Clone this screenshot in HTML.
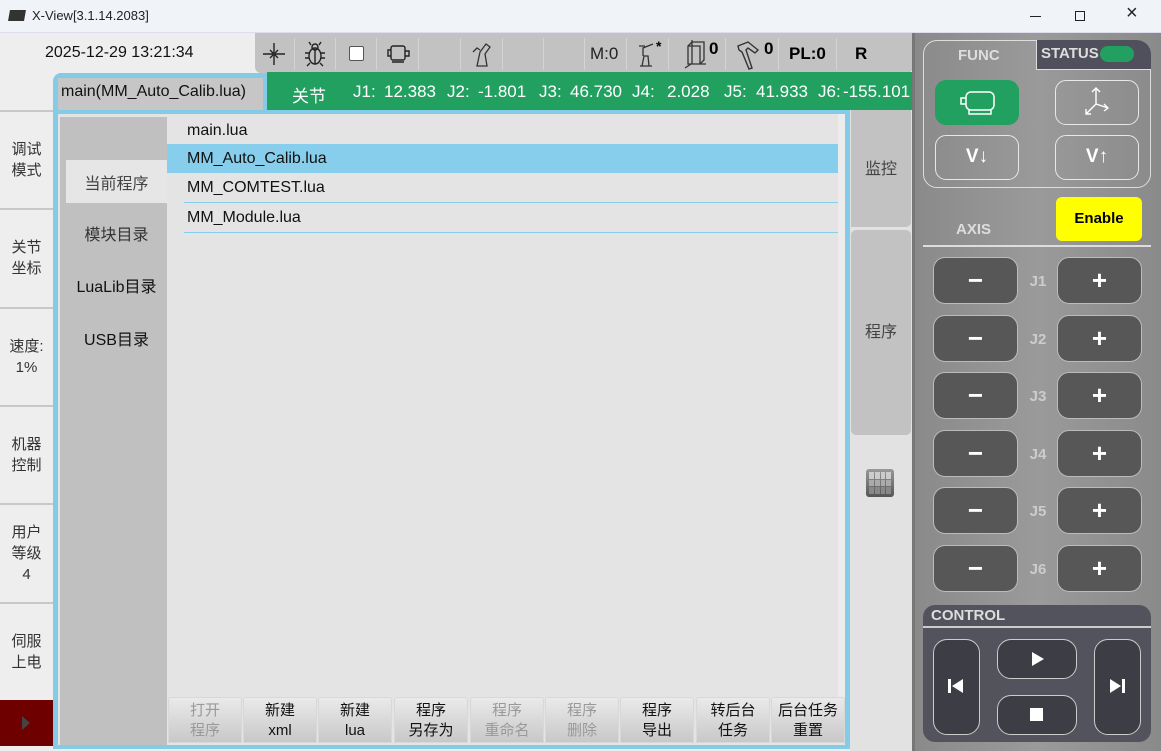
<!DOCTYPE html>
<html><head><meta charset="utf-8"><style>
*{margin:0;padding:0;box-sizing:border-box}
body{width:1161px;height:751px;overflow:hidden;background:#eeeeee;font-family:"Liberation Sans","Noto Sans CJK SC",sans-serif;position:relative}
.a{position:absolute}
.t{color:#222}
.lc{position:absolute;left:0;width:53px;font-size:15px;color:#333;text-align:center;line-height:21px;border-top:2px solid #c8c8c8}
.row{position:absolute;left:167px;width:671px;height:29px;font-size:16px;line-height:29px;padding-left:20px;color:#111}
.bb{position:absolute;top:697px;width:74px;height:46px;background:linear-gradient(#eaeaea,#c8c8c8);border:1px solid #d8d8d8;border-radius:3px 3px 0 0;font-size:15px;line-height:20px;text-align:center;padding-top:3px;color:#111}
.bb.d{color:#999}
.ax{position:absolute;width:85px;height:47px;background:#575757;border:1.5px solid #bbb;border-radius:12px;color:#fff;font-size:26px;font-weight:bold;text-align:center;line-height:44px}
.jl{position:absolute;left:1026px;width:24px;color:#ccc;font-weight:bold;font-size:15px;text-align:center}
.fb{position:absolute;width:84px;height:45px;border:1.5px solid #e8e8e8;border-radius:11px;color:#fff;font-size:19px;font-weight:bold;text-align:center;line-height:42px}
.cb{position:absolute;border:1.5px solid #ccc;border-radius:14px;background:#3d3d45}
.sep{position:absolute;top:38px;width:1px;height:32px;background:#d4d4d4}
.g{position:absolute;top:82px;color:#fff;font-size:17px;white-space:nowrap}
</style></head><body>
<div class="a" style="left:0;top:0;width:1161px;height:33px;background:#f0f4f9;border-bottom:1px solid #dde"></div>
<div class="a" style="left:9px;top:10px;width:16px;height:11px;background:#333;transform:skewX(-10deg)"></div>
<div class="a" style="left:32px;top:8px;font-size:13px;color:#222">X-View[3.1.14.2083]</div>
<div class="a" style="left:1030px;top:16px;width:11px;height:1px;background:#222"></div>
<div class="a" style="left:1075px;top:11px;width:10px;height:10px;border:1px solid #222"></div>
<div class="a" style="left:1126px;top:2px;font-size:20px;color:#222">×</div>

<div class="a" style="left:0;top:33px;width:53px;height:718px;background:#eeeeee"></div>
<div class="a" style="left:45px;top:44px;font-size:16px;color:#111">2025-12-29 13:21:34</div>
<div class="lc" style="top:110px;height:98px;padding-top:27px">调试<br>模式</div>
<div class="lc" style="top:208px;height:99px;padding-top:27px">关节<br>坐标</div>
<div class="lc" style="top:307px;height:98px;padding-top:27px">速度:<br>1%</div>
<div class="lc" style="top:405px;height:98px;padding-top:27px">机器<br>控制</div>
<div class="lc" style="top:503px;height:99px;padding-top:17px">用户<br>等级<br>4</div>
<div class="lc" style="top:602px;height:98px;padding-top:27px">伺服<br>上电</div>
<div class="a" style="left:0;top:700px;width:53px;height:46px;background:#6e0000"></div>
<div class="a" style="left:22px;top:716px;width:0;height:0;border-left:8px solid #444;border-top:7px solid transparent;border-bottom:7px solid transparent"></div>

<div class="a" style="left:255px;top:33px;width:658px;height:40px;background:#c2c2c2;border-radius:0 0 6px 6px"></div>
<div class="sep" style="left:294px"></div><div class="sep" style="left:335px"></div><div class="sep" style="left:376px"></div><div class="sep" style="left:418px"></div><div class="sep" style="left:460px"></div><div class="sep" style="left:502px"></div><div class="sep" style="left:543px"></div><div class="sep" style="left:584px"></div><div class="sep" style="left:626px"></div><div class="sep" style="left:668px"></div><div class="sep" style="left:725px"></div><div class="sep" style="left:778px"></div><div class="sep" style="left:836px"></div>
<svg class="a" style="left:262px;top:42px" width="24" height="24" viewBox="0 0 24 24" stroke="#222" fill="none" stroke-width="1.4"><path d="M12 1v22M1 12h22M8 8l3 3M16 8l-3 3M8 16l3-3M16 16l-3-3"/></svg>
<svg class="a" style="left:303px;top:41px" width="24" height="26" viewBox="0 0 24 26" stroke="#222" fill="none" stroke-width="1.4"><ellipse cx="12" cy="15" rx="6" ry="8"/><circle cx="12" cy="6" r="3"/><path d="M12 8v15M6 12H2M6 17H2M18 12h4M18 17h4M7 22l-3 3M17 22l3 3M8 4L6 1M16 4l2-3"/></svg>
<div class="a" style="left:349px;top:46px;width:15px;height:15px;background:#fff;border:1px solid #555;border-radius:2px"></div>
<svg class="a" style="left:386px;top:44px" width="26" height="20" viewBox="0 0 26 20" stroke="#222" fill="none" stroke-width="1.4"><rect x="5" y="2" width="14" height="14" rx="2"/><path d="M19 7h4v5h-4M5 6H2v6h3M6 18h12"/></svg>
<svg class="a" style="left:470px;top:40px" width="24" height="28" viewBox="0 0 24 28" stroke="#333" fill="none" stroke-width="1.3"><path d="M7 26l3-14 6-8 4 3-5 7 2 12zM3 12l4-4 3 2"/></svg>
<div class="a t" style="left:590px;top:44px;font-size:17px">M:0</div>
<svg class="a" style="left:636px;top:40px" width="24" height="28" viewBox="0 0 24 28" stroke="#333" fill="none" stroke-width="1.3"><path d="M4 26h12M6 26l2-10h4l1 10M7 16V8l10-4M3 6h6"/></svg>
<div class="a" style="left:656px;top:38px;font-size:14px;font-weight:bold">*</div>
<svg class="a" style="left:680px;top:38px" width="28" height="32" viewBox="0 0 28 32" stroke="#333" fill="none" stroke-width="1.3"><path d="M8 8h12v18H8zM8 8l4-4h12v18l-4 4M5 30l6-4M12 2v24M20 26h6"/></svg>
<div class="a" style="left:709px;top:39px;font-size:17px;font-weight:bold">0</div>
<svg class="a" style="left:736px;top:40px" width="26" height="30" viewBox="0 0 26 30" stroke="#333" fill="none" stroke-width="1.4"><path d="M2 6l10-4 10 8-3 3-7-5-2 2 6 18-3 1-7-17-3-2z"/></svg>
<div class="a" style="left:764px;top:39px;font-size:17px;font-weight:bold">0</div>
<div class="a" style="left:789px;top:44px;font-size:17px;font-weight:bold">PL:0</div>
<div class="a" style="left:855px;top:44px;font-size:17px;font-weight:bold">R</div>

<div class="a" style="left:53px;top:73px;width:797px;height:676px;background:#84cbe8;border-radius:8px 0 0 0"></div>
<div class="a" style="left:58px;top:78px;width:205px;height:32px;background:#c6c6c6;font-size:16px;line-height:28px;padding-left:3px;color:#111">main(MM_Auto_Calib.lua)</div>
<div class="a" style="left:267px;top:72px;width:645px;height:38px;background:#22a060"></div>
<div class="g" style="left:292px">关节</div>
<div class="g" style="left:353px">J1:</div><div class="g" style="left:384px">12.383</div>
<div class="g" style="left:447px">J2:</div><div class="g" style="left:478px">-1.801</div>
<div class="g" style="left:539px">J3:</div><div class="g" style="left:570px">46.730</div>
<div class="g" style="left:632px">J4:</div><div class="g" style="left:667px">2.028</div>
<div class="g" style="left:724px">J5:</div><div class="g" style="left:756px">41.933</div>
<div class="g" style="left:818px">J6:</div><div class="g" style="left:843px">-155.101</div>
<div class="a" style="left:58px;top:114px;width:787px;height:631px;background:#e4e4e4"></div>
<div class="a" style="left:60px;top:117px;width:107px;height:628px;background:#c0c0c0"></div>
<div class="a" style="left:66px;top:160px;width:101px;height:43px;background:#e6e6e6"></div>
<div class="a" style="left:66px;top:170px;width:101px;text-align:center;font-size:16px;color:#444">当前程序</div>
<div class="a" style="left:66px;top:221px;width:101px;text-align:center;font-size:16px;color:#333">模块目录</div>
<div class="a" style="left:66px;top:273px;width:101px;text-align:center;font-size:16px;color:#111">LuaLib目录</div>
<div class="a" style="left:66px;top:326px;width:101px;text-align:center;font-size:16px;color:#111">USB目录</div>
<div class="row" style="top:116px">main.lua</div>
<div class="row" style="top:144px;background:#86ceeb">MM_Auto_Calib.lua</div>
<div class="row" style="top:173px">MM_COMTEST.lua</div>
<div class="a" style="left:184px;top:202px;width:654px;height:1px;background:#86ceeb"></div>
<div class="row" style="top:203px">MM_Module.lua</div>
<div class="a" style="left:184px;top:232px;width:654px;height:1px;background:#86ceeb"></div>
<div class="a" style="left:838px;top:114px;width:7px;height:583px;background:#ececec"></div>

<div class="bb d" style="left:168px">打开<br>程序</div>
<div class="bb" style="left:243px">新建<br>xml</div>
<div class="bb" style="left:318px">新建<br>lua</div>
<div class="bb" style="left:394px">程序<br>另存为</div>
<div class="bb d" style="left:470px">程序<br>重命名</div>
<div class="bb d" style="left:545px">程序<br>删除</div>
<div class="bb" style="left:620px">程序<br>导出</div>
<div class="bb" style="left:696px">转后台<br>任务</div>
<div class="bb" style="left:771px">后台任务<br>重置</div>

<div class="a" style="left:850px;top:110px;width:62px;height:641px;background:#e2e2e2"></div>
<div class="a" style="left:851px;top:110px;width:60px;height:117px;background:#c2c2c2;border-radius:0 0 5px 0;font-size:16px;color:#444;text-align:center;line-height:120px">监控</div>
<div class="a" style="left:851px;top:230px;width:60px;height:205px;background:#c2c2c2;border-radius:5px;font-size:16px;color:#444;text-align:center;line-height:205px">程序</div>
<div class="a" style="left:866px;top:469px;width:28px;height:28px;border-radius:3px;background:linear-gradient(#999,#555);padding:3px;display:grid;grid-template-columns:repeat(4,1fr);gap:1px">
<i style="background:#ccc"></i><i style="background:#ccc"></i><i style="background:#ccc"></i><i style="background:#ccc"></i><i style="background:#aaa"></i><i style="background:#aaa"></i><i style="background:#aaa"></i><i style="background:#aaa"></i><i style="background:#888"></i><i style="background:#888"></i><i style="background:#888"></i><i style="background:#888"></i></div>
<div class="a" style="left:912px;top:33px;width:3px;height:718px;background:#777"></div>

<div class="a" style="left:915px;top:33px;width:246px;height:718px;background:linear-gradient(90deg,#8a8a8a,#9a9a9a 50%,#8a8a8a)"></div>
<div class="a" style="left:923px;top:40px;width:228px;height:148px;border:1.5px solid #ddd;border-radius:14px"></div>
<div class="a" style="left:1036px;top:40px;width:115px;height:30px;background:#50505c;border-radius:0 14px 0 0;border-left:1.5px solid #ddd;border-bottom:1.5px solid #ddd"></div>
<div class="a" style="left:958px;top:47px;font-size:15px;font-weight:bold;color:#ddd">FUNC</div>
<div class="a" style="left:1041px;top:45px;font-size:15px;font-weight:bold;color:#ddd">STATUS</div>
<div class="a" style="left:1100px;top:46px;width:34px;height:16px;background:#22a060;border-radius:8px"></div>
<div class="fb" style="left:935px;top:80px;background:#22a060;border:none"></div>
<svg class="a" style="left:958px;top:89px" width="40" height="28" viewBox="0 0 40 28" stroke="#fff" fill="none" stroke-width="1.5"><rect x="8" y="3" width="28" height="18" rx="5"/><path d="M8 9H3v6h5M11 21v4h22v-4"/></svg>
<div class="fb" style="left:1055px;top:80px"></div>
<svg class="a" style="left:1082px;top:84px" width="32" height="36" viewBox="0 0 32 36" stroke="#fff" fill="none" stroke-width="1.4"><path d="M14 4v16M10 8l4-4 4 4M14 20l12 4M22 20l4 4-4 3M14 20L4 30M4 25v5h5"/></svg>
<div class="fb" style="left:935px;top:135px">V↓</div>
<div class="fb" style="left:1055px;top:135px">V↑</div>
<div class="a" style="left:956px;top:221px;font-size:15px;font-weight:bold;color:#ddd">AXIS</div>
<div class="a" style="left:1056px;top:197px;width:86px;height:44px;background:#ffff00;border-radius:6px;font-size:15px;font-weight:bold;text-align:center;line-height:44px">Enable</div>
<div class="a" style="left:923px;top:245px;width:228px;height:2px;background:#ddd"></div>

<div class="ax" style="left:933px;top:257px">−</div><div class="jl" style="top:273px">J1</div><div class="ax" style="left:1057px;top:257px">+</div>
<div class="ax" style="left:933px;top:315px">−</div><div class="jl" style="top:331px">J2</div><div class="ax" style="left:1057px;top:315px">+</div>
<div class="ax" style="left:933px;top:372px">−</div><div class="jl" style="top:388px">J3</div><div class="ax" style="left:1057px;top:372px">+</div>
<div class="ax" style="left:933px;top:430px">−</div><div class="jl" style="top:446px">J4</div><div class="ax" style="left:1057px;top:430px">+</div>
<div class="ax" style="left:933px;top:487px">−</div><div class="jl" style="top:503px">J5</div><div class="ax" style="left:1057px;top:487px">+</div>
<div class="ax" style="left:933px;top:545px">−</div><div class="jl" style="top:561px">J6</div><div class="ax" style="left:1057px;top:545px">+</div>

<div class="a" style="left:923px;top:605px;width:228px;height:137px;background:#53535d;border-radius:12px"></div>
<div class="a" style="left:931px;top:607px;font-size:15px;font-weight:bold;color:#ddd">CONTROL</div>
<div class="a" style="left:923px;top:626px;width:228px;height:2px;background:#ccc"></div>
<div class="cb" style="left:933px;top:639px;width:47px;height:96px"></div>
<div class="cb" style="left:997px;top:639px;width:80px;height:40px"></div>
<div class="cb" style="left:997px;top:695px;width:80px;height:40px"></div>
<div class="cb" style="left:1094px;top:639px;width:47px;height:96px"></div>
<svg class="a" style="left:947px;top:678px" width="18" height="16" viewBox="0 0 18 16" fill="#fff"><rect x="1" y="1" width="3" height="14"/><path d="M16 1v14L5 8z"/></svg>
<svg class="a" style="left:1108px;top:678px" width="18" height="16" viewBox="0 0 18 16" fill="#fff"><rect x="14" y="1" width="3" height="14"/><path d="M2 1v14l11-7z"/></svg>
<svg class="a" style="left:1031px;top:651px" width="14" height="16" viewBox="0 0 14 16" fill="#fff"><path d="M1 1v14l12-7z"/></svg>
<div class="a" style="left:1030px;top:708px;width:13px;height:13px;background:#fff"></div>
</body></html>
